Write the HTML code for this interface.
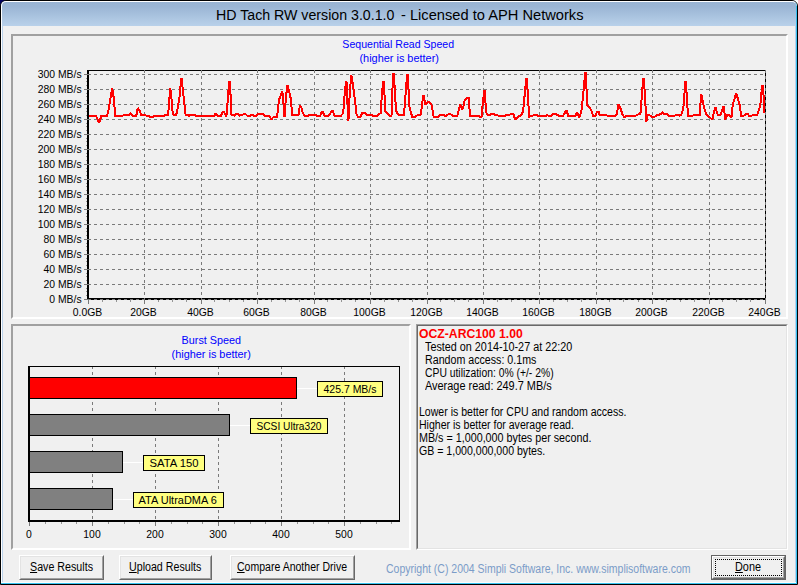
<!DOCTYPE html>
<html><head><meta charset="utf-8"><title>HD Tach RW version 3.0.1.0 - Licensed to APH Networks</title>
<style>
html,body{margin:0;padding:0;background:#f0f0f0;overflow:hidden}
#win{position:relative;width:798px;height:585px;background:#f0f0f0;overflow:hidden;font-family:"Liberation Sans", Arial, sans-serif}
#frame{left:0;top:0;width:798px;height:585px;border:1px solid #000;border-radius:6px 6px 0 0;overflow:hidden;background:#f0f0f0}
#org{left:-1px;top:-1px;width:798px;height:585px}
#win *{box-sizing:border-box}
.abs,.chart,.t,.btn,.panel{position:absolute}
.t{white-space:pre;line-height:1;transform-origin:0 0;margin:0;padding:0}
.t u{text-decoration:underline;text-underline-offset:1px;text-decoration-thickness:1px}
.titlebar{left:0;top:0;width:798px;height:26px;background:linear-gradient(#98b3d2 0,#9ab5d4 25%,#b9d1ea 100%)}
.panel{border-style:solid;border-width:2px;border-color:#a0a0a0 #fff #fff #a0a0a0}
.info{border-style:solid;border-width:1px;border-color:#a0a0a0 #fff #fff #a0a0a0}
.info:after{content:"";position:absolute;left:0;top:0;right:0;bottom:0;border-style:solid;border-width:1px;border-color:#696969 #e3e3e3 #e3e3e3 #696969}
.btn{background:#f0f0f0;border-style:solid;border-width:1px;border-color:#fff #696969 #696969 #fff}
.btn:after{content:"";position:absolute;left:0;top:0;right:0;bottom:0;border-style:solid;border-width:1px;border-color:#e3e3e3 #a0a0a0 #a0a0a0 #e3e3e3}
.btn.def{border:1px solid #646464;background:#f0f0f0}
.btn.def:after{display:none}
.btn.in{left:0;top:0;right:0;bottom:0}
.focus{position:absolute;left:2px;top:2px;right:2px;bottom:2px;border:1px dotted #000}
</style></head>
<body>
<div id="win">
<div class="abs" style="left:0;top:0;width:6px;height:6px;background:#00005c"></div>
<div class="abs" style="left:792px;top:0;width:6px;height:6px;background:#fff"></div>
<div class="abs" id="frame"><div class="abs" id="org">
<div class="abs titlebar"><span class="t" style="left:215.8px;top:7.96px;font-size:14.7px;color:#000;transform:scaleX(0.9655)">HD Tach RW version 3.0.1.0</span>
<span class="t" style="left:400.5px;top:7.96px;font-size:14.7px;color:#000;transform:scaleX(0.9980)">- Licensed to APH Networks</span></div>
<!-- window frame inner lines -->
<div class="abs" style="left:1px;top:1px;width:796px;height:30px;border:1px solid #fff;border-bottom:0;border-right-color:#7fd4f5;border-radius:5px 5px 0 0"></div>
<div class="abs" style="left:1px;top:6px;width:1px;height:578px;background:#fff"></div>
<div class="abs" style="left:2px;top:26px;width:1px;height:557px;background:#b9d1ea"></div>
<div class="abs" style="left:796px;top:6px;width:1px;height:578px;background:#38bff0"></div>
<div class="abs" style="left:795px;top:26px;width:1px;height:557px;background:#b9d1ea"></div>
<div class="abs" style="left:1px;top:583px;width:796px;height:1px;background:#38c4f0"></div>
<div class="abs" style="left:2px;top:582px;width:794px;height:1px;background:#f8fbfd"></div>

<div class="panel" style="left:11px;top:34px;width:777px;height:285px"></div>
<div class="panel" style="left:11px;top:324px;width:400px;height:226px"></div>
<div class="abs info" style="left:416px;top:324px;width:372px;height:226px">
<span class="t" style="left:2.4px;top:3.32px;font-size:12.5px;color:#ff0000;transform:scaleX(0.9765);font-weight:bold">OCZ-ARC100 1.00</span>
<span class="t" style="left:7.9px;top:16.32px;font-size:12.5px;color:#000;transform:scaleX(0.8645)">Tested on 2014-10-27 at 22:20</span>
<span class="t" style="left:7.7px;top:29.32px;font-size:12.5px;color:#000;transform:scaleX(0.8529)">Random access: 0.1ms</span>
<span class="t" style="left:7.9px;top:42.32px;font-size:12.5px;color:#000;transform:scaleX(0.8283)">CPU utilization: 0% (+/- 2%)</span>
<span class="t" style="left:7.8px;top:55.32px;font-size:12.5px;color:#000;transform:scaleX(0.8738)">Average read: 249.7 MB/s</span>
<span class="t" style="left:1.6px;top:81.32px;font-size:12.5px;color:#000;transform:scaleX(0.8433)">Lower is better for CPU and random access.</span>
<span class="t" style="left:1.6px;top:94.32px;font-size:12.5px;color:#000;transform:scaleX(0.8444)">Higher is better for average read.</span>
<span class="t" style="left:1.6px;top:107.32px;font-size:12.5px;color:#000;transform:scaleX(0.8599)">MB/s = 1,000,000 bytes per second.</span>
<span class="t" style="left:1.8px;top:120.32px;font-size:12.5px;color:#000;transform:scaleX(0.8465)">GB = 1,000,000,000 bytes.</span>
</div>
<svg class="chart" style="left:13px;top:36px" width="773" height="281" viewBox="13 36 773 281" font-family='"Liberation Sans", Arial, sans-serif'>
<text x="398.2" y="47.8" text-anchor="middle" textLength="111.7" lengthAdjust="spacingAndGlyphs" fill="#0000ff" font-size="10.67">Sequential Read Speed</text>
<text x="399.2" y="61.8" text-anchor="middle" textLength="79.5" lengthAdjust="spacingAndGlyphs" fill="#0000ff" font-size="10.67">(higher is better)</text>
<g shape-rendering="crispEdges" fill="#000">
<rect x="87" y="70" width="679" height="1"/>
<rect x="87" y="70" width="2" height="230"/>
<rect x="87" y="298" width="679" height="2"/>
<rect x="765" y="70" width="1" height="230"/>
<rect x="84" y="74" width="4" height="1" fill="#7a7a7a"/>
<rect x="84" y="89" width="4" height="1" fill="#7a7a7a"/>
<rect x="84" y="104" width="4" height="1" fill="#7a7a7a"/>
<rect x="84" y="119" width="4" height="1" fill="#7a7a7a"/>
<rect x="84" y="134" width="4" height="1" fill="#7a7a7a"/>
<rect x="84" y="149" width="4" height="1" fill="#7a7a7a"/>
<rect x="84" y="164" width="4" height="1" fill="#7a7a7a"/>
<rect x="84" y="179" width="4" height="1" fill="#7a7a7a"/>
<rect x="84" y="194" width="4" height="1" fill="#7a7a7a"/>
<rect x="84" y="209" width="4" height="1" fill="#7a7a7a"/>
<rect x="84" y="224" width="4" height="1" fill="#7a7a7a"/>
<rect x="84" y="239" width="4" height="1" fill="#7a7a7a"/>
<rect x="84" y="254" width="4" height="1" fill="#7a7a7a"/>
<rect x="84" y="269" width="4" height="1" fill="#7a7a7a"/>
<rect x="84" y="284" width="4" height="1" fill="#7a7a7a"/>
<rect x="84" y="299" width="4" height="1" fill="#7a7a7a"/>
<rect x="88" y="300" width="1" height="4" fill="#7a7a7a"/>
<rect x="144" y="300" width="1" height="4" fill="#7a7a7a"/>
<rect x="201" y="300" width="1" height="4" fill="#7a7a7a"/>
<rect x="257" y="300" width="1" height="4" fill="#7a7a7a"/>
<rect x="314" y="300" width="1" height="4" fill="#7a7a7a"/>
<rect x="370" y="300" width="1" height="4" fill="#7a7a7a"/>
<rect x="427" y="300" width="1" height="4" fill="#7a7a7a"/>
<rect x="483" y="300" width="1" height="4" fill="#7a7a7a"/>
<rect x="539" y="300" width="1" height="4" fill="#7a7a7a"/>
<rect x="596" y="300" width="1" height="4" fill="#7a7a7a"/>
<rect x="652" y="300" width="1" height="4" fill="#7a7a7a"/>
<rect x="709" y="300" width="1" height="4" fill="#7a7a7a"/>
<rect x="765" y="300" width="1" height="4" fill="#7a7a7a"/>
</g>
<path d="M88 74.5H765M88 89.5H765M88 104.5H765M88 119.5H765M88 134.5H765M88 149.5H765M88 164.5H765M88 179.5H765M88 194.5H765M88 209.5H765M88 224.5H765M88 239.5H765M88 254.5H765M88 269.5H765M88 284.5H765M88 299.5H765" stroke="#7a7a7a" stroke-width="1" stroke-dasharray="3 3" fill="none" shape-rendering="crispEdges"/>
<path d="M144.5 70V301M201.5 70V301M257.5 70V301M314.5 70V301M370.5 70V301M427.5 70V301M483.5 70V301M539.5 70V301M596.5 70V301M652.5 70V301M709.5 70V301M765.5 70V301" stroke="#7a7a7a" stroke-width="1" stroke-dasharray="3 3" fill="none" shape-rendering="crispEdges"/>
<g shape-rendering="crispEdges" fill="#959595"><rect x="102" y="300" width="1" height="2"/><rect x="116" y="300" width="1" height="2"/><rect x="130" y="300" width="1" height="2"/><rect x="158" y="300" width="1" height="2"/><rect x="172" y="300" width="1" height="2"/><rect x="186" y="300" width="1" height="2"/><rect x="214" y="300" width="1" height="2"/><rect x="229" y="300" width="1" height="2"/><rect x="243" y="300" width="1" height="2"/><rect x="271" y="300" width="1" height="2"/><rect x="285" y="300" width="1" height="2"/><rect x="299" y="300" width="1" height="2"/><rect x="327" y="300" width="1" height="2"/><rect x="341" y="300" width="1" height="2"/><rect x="355" y="300" width="1" height="2"/><rect x="384" y="300" width="1" height="2"/><rect x="398" y="300" width="1" height="2"/><rect x="412" y="300" width="1" height="2"/><rect x="440" y="300" width="1" height="2"/><rect x="454" y="300" width="1" height="2"/><rect x="468" y="300" width="1" height="2"/><rect x="497" y="300" width="1" height="2"/><rect x="511" y="300" width="1" height="2"/><rect x="525" y="300" width="1" height="2"/><rect x="553" y="300" width="1" height="2"/><rect x="567" y="300" width="1" height="2"/><rect x="581" y="300" width="1" height="2"/><rect x="609" y="300" width="1" height="2"/><rect x="623" y="300" width="1" height="2"/><rect x="638" y="300" width="1" height="2"/><rect x="666" y="300" width="1" height="2"/><rect x="680" y="300" width="1" height="2"/><rect x="694" y="300" width="1" height="2"/><rect x="722" y="300" width="1" height="2"/><rect x="736" y="300" width="1" height="2"/><rect x="750" y="300" width="1" height="2"/><rect x="86" y="78" width="1" height="1"/><rect x="86" y="81" width="1" height="1"/><rect x="86" y="85" width="1" height="1"/><rect x="86" y="93" width="1" height="1"/><rect x="86" y="96" width="1" height="1"/><rect x="86" y="100" width="1" height="1"/><rect x="86" y="108" width="1" height="1"/><rect x="86" y="111" width="1" height="1"/><rect x="86" y="115" width="1" height="1"/><rect x="86" y="123" width="1" height="1"/><rect x="86" y="126" width="1" height="1"/><rect x="86" y="130" width="1" height="1"/><rect x="86" y="138" width="1" height="1"/><rect x="86" y="141" width="1" height="1"/><rect x="86" y="145" width="1" height="1"/><rect x="86" y="153" width="1" height="1"/><rect x="86" y="156" width="1" height="1"/><rect x="86" y="160" width="1" height="1"/><rect x="86" y="168" width="1" height="1"/><rect x="86" y="171" width="1" height="1"/><rect x="86" y="175" width="1" height="1"/><rect x="86" y="183" width="1" height="1"/><rect x="86" y="186" width="1" height="1"/><rect x="86" y="190" width="1" height="1"/><rect x="86" y="198" width="1" height="1"/><rect x="86" y="201" width="1" height="1"/><rect x="86" y="205" width="1" height="1"/><rect x="86" y="213" width="1" height="1"/><rect x="86" y="216" width="1" height="1"/><rect x="86" y="220" width="1" height="1"/><rect x="86" y="228" width="1" height="1"/><rect x="86" y="231" width="1" height="1"/><rect x="86" y="235" width="1" height="1"/><rect x="86" y="243" width="1" height="1"/><rect x="86" y="246" width="1" height="1"/><rect x="86" y="250" width="1" height="1"/><rect x="86" y="258" width="1" height="1"/><rect x="86" y="261" width="1" height="1"/><rect x="86" y="265" width="1" height="1"/><rect x="86" y="273" width="1" height="1"/><rect x="86" y="276" width="1" height="1"/><rect x="86" y="280" width="1" height="1"/><rect x="86" y="288" width="1" height="1"/><rect x="86" y="291" width="1" height="1"/><rect x="86" y="295" width="1" height="1"/></g>
<text x="81.6" y="77.9" text-anchor="end" fill="#000" font-size="10.4">300 MB/s</text>
<text x="81.6" y="92.9" text-anchor="end" fill="#000" font-size="10.4">280 MB/s</text>
<text x="81.6" y="107.9" text-anchor="end" fill="#000" font-size="10.4">260 MB/s</text>
<text x="81.6" y="122.9" text-anchor="end" fill="#000" font-size="10.4">240 MB/s</text>
<text x="81.6" y="137.9" text-anchor="end" fill="#000" font-size="10.4">220 MB/s</text>
<text x="81.6" y="152.9" text-anchor="end" fill="#000" font-size="10.4">200 MB/s</text>
<text x="81.6" y="167.9" text-anchor="end" fill="#000" font-size="10.4">180 MB/s</text>
<text x="81.6" y="182.9" text-anchor="end" fill="#000" font-size="10.4">160 MB/s</text>
<text x="81.6" y="197.9" text-anchor="end" fill="#000" font-size="10.4">140 MB/s</text>
<text x="81.6" y="212.9" text-anchor="end" fill="#000" font-size="10.4">120 MB/s</text>
<text x="81.6" y="227.9" text-anchor="end" fill="#000" font-size="10.4">100 MB/s</text>
<text x="81.6" y="242.9" text-anchor="end" fill="#000" font-size="10.4">80 MB/s</text>
<text x="81.6" y="257.9" text-anchor="end" fill="#000" font-size="10.4">60 MB/s</text>
<text x="81.6" y="272.9" text-anchor="end" fill="#000" font-size="10.4">40 MB/s</text>
<text x="81.6" y="287.9" text-anchor="end" fill="#000" font-size="10.4">20 MB/s</text>
<text x="81.6" y="302.9" text-anchor="end" fill="#000" font-size="10.4">0 MB/s</text>
<text x="87.5" y="315.6" text-anchor="middle" fill="#000" font-size="10.4">0.0GB</text>
<text x="143.5" y="315.6" text-anchor="middle" fill="#000" font-size="10.4">20GB</text>
<text x="200.5" y="315.6" text-anchor="middle" fill="#000" font-size="10.4">40GB</text>
<text x="256.5" y="315.6" text-anchor="middle" fill="#000" font-size="10.4">60GB</text>
<text x="313.5" y="315.6" text-anchor="middle" fill="#000" font-size="10.4">80GB</text>
<text x="369.5" y="315.6" text-anchor="middle" fill="#000" font-size="10.4">100GB</text>
<text x="426.5" y="315.6" text-anchor="middle" fill="#000" font-size="10.4">120GB</text>
<text x="482.5" y="315.6" text-anchor="middle" fill="#000" font-size="10.4">140GB</text>
<text x="538.5" y="315.6" text-anchor="middle" fill="#000" font-size="10.4">160GB</text>
<text x="595.5" y="315.6" text-anchor="middle" fill="#000" font-size="10.4">180GB</text>
<text x="651.5" y="315.6" text-anchor="middle" fill="#000" font-size="10.4">200GB</text>
<text x="708.5" y="315.6" text-anchor="middle" fill="#000" font-size="10.4">220GB</text>
<text x="764.5" y="315.6" text-anchor="middle" fill="#000" font-size="10.4">240GB</text>
<path d="M89.1,115.6 95.8,115.6 99.2,122.8 101.4,115.6 107.0,115.6 108.6,110.0 112.2,88.0 113.7,97.7 115.3,115.6 123.0,115.6 124.5,114.8 129.1,114.6 130.6,113.6 132.7,115.6 136.3,115.6 137.8,108.0 139.9,111.0 141.2,114.8 145.5,115.1 146.5,115.8 149.1,116.2 150.6,117.0 153.2,117.0 154.2,115.8 164.6,115.8 165.6,114.8 168.2,114.6 169.2,100.8 170.3,88.5 171.3,96.7 172.8,114.1 173.8,114.9 176.2,114.9 177.9,106.9 179.5,96.7 181.2,79.4 181.8,79.4 182.8,90.5 184.1,100.8 185.6,115.1 189.2,115.6 190.8,114.8 194.9,114.8 195.9,115.8 214.4,115.8 215.4,113.9 216.4,113.9 217.9,115.6 221.0,115.6 222.6,111.8 224.1,111.8 225.9,116.1 226.4,116.1 227.7,100.8 229.1,81.5 229.6,81.5 230.8,98.7 231.5,115.1 234.4,115.6 236.4,113.9 238.1,113.9 239.3,115.8 241.2,114.8 242.7,114.8 244.2,113.9 245.3,113.9 247.3,115.8 250.4,115.8 251.4,114.8 252.9,114.8 254.0,115.8 256.0,115.8 258.1,113.9 262.7,113.9 264.7,115.8 269.4,115.8 270.9,118.7 271.9,118.7 273.5,116.9 277.1,116.9 277.9,109.5 278.9,100.3 281.9,92.3 282.4,92.3 283.7,105.9 284.3,116.1 284.8,116.1 285.8,97.7 287.4,86.1 287.9,86.1 289.9,94.6 291.2,100.8 291.9,114.8 298.6,114.8 299.8,105.4 301.2,106.9 302.9,113.1 304.7,115.6 308.3,115.6 309.4,114.8 315.6,114.8 316.7,115.8 320.3,115.8 321.8,111.8 322.8,111.8 324.4,115.8 327.9,115.8 330.5,113.1 331.7,111.0 332.8,111.0 334.6,115.8 340.8,115.8 343.3,113.1 343.8,103.8 344.9,92.6 346.0,81.5 346.5,81.5 347.4,100.8 348.0,119.5 348.5,119.5 349.3,100.8 350.0,90.5 351.1,76.4 351.6,76.4 353.6,89.5 354.6,97.7 355.6,105.9 356.7,115.1 358.2,116.9 360.3,116.9 362.3,113.1 365.4,112.9 366.9,114.8 371.5,114.8 373.1,115.8 377.2,115.8 378.7,114.1 380.8,113.1 381.3,102.8 382.1,92.6 383.2,81.5 383.7,81.5 384.7,97.7 385.3,111.0 389.6,115.8 391.2,115.8 392.0,114.1 392.2,95.6 393.1,74.3 393.6,74.3 394.7,87.4 395.3,98.7 396.1,111.0 398.3,114.8 404.0,114.8 405.0,101.8 406.0,88.5 407.1,74.8 407.6,74.8 408.6,90.5 409.1,105.9 410.6,111.0 412.2,116.9 414.7,116.9 416.3,115.6 420.9,114.6 421.9,105.9 423.2,96.4 423.7,96.4 425.5,104.9 427.6,101.8 429.1,101.8 431.7,105.4 432.7,111.0 433.7,116.9 438.3,116.9 439.9,114.8 444.0,114.8 445.0,115.8 446.5,115.8 448.8,113.9 450.1,113.9 452.7,115.8 457.3,115.8 458.3,112.1 460.1,105.1 460.6,105.1 462.1,109.5 463.6,105.9 464.6,100.3 467.2,97.7 468.7,97.9 469.4,107.9 470.1,116.7 471.3,115.8 478.5,115.8 479.5,116.9 481.5,116.9 482.1,110.0 483.1,100.8 484.2,91.2 484.7,91.2 485.6,103.8 486.4,112.6 487.7,114.8 490.3,114.8 491.3,113.9 493.3,113.9 494.9,114.8 496.9,114.8 498.5,115.8 505.1,115.8 506.7,114.8 509.7,114.8 510.8,113.9 512.8,113.9 513.8,115.1 514.9,118.7 516.2,118.7 518.5,116.7 521.5,114.8 523.1,111.0 524.1,100.8 525.1,90.5 526.2,79.4 526.8,79.4 527.7,91.5 528.5,105.9 529.2,116.9 530.8,116.2 535.4,114.8 536.5,114.8 537.6,115.8 545.8,115.8 547.1,114.8 548.3,115.8 550.9,115.8 553.5,113.9 556.0,113.9 558.6,115.8 563.2,115.8 566.0,110.5 566.5,110.5 568.3,115.8 575.5,115.8 576.5,112.9 577.6,113.1 579.1,117.9 580.1,116.2 581.7,109.0 582.7,98.7 584.0,86.4 585.1,73.3 585.6,73.3 586.6,90.5 587.1,104.9 590.4,108.5 591.9,112.1 593.3,115.8 595.5,115.8 597.1,111.8 598.6,111.8 599.6,114.8 605.8,114.8 607.3,115.8 615.1,115.8 616.7,114.1 618.5,104.6 619.0,104.6 620.8,109.0 622.3,114.1 624.4,117.2 625.9,115.8 635.6,115.8 637.2,114.8 639.7,114.1 640.8,112.1 641.3,102.8 642.1,91.5 643.2,79.4 643.7,79.4 644.9,93.6 645.6,107.9 646.0,120.6 646.5,120.6 647.4,114.8 649.5,115.1 652.1,117.2 654.1,117.2 657.2,115.1 660.3,114.3 662.3,112.6 663.8,113.9 666.9,113.9 669.0,115.8 674.6,115.8 676.2,114.8 678.2,114.8 679.7,115.8 681.3,114.8 682.8,110.0 683.8,104.9 684.4,94.6 685.4,81.5 685.9,81.5 686.7,94.6 687.4,104.9 687.9,115.8 692.7,115.8 693.7,114.8 699.9,114.8 700.4,104.9 701.1,95.3 701.6,95.3 703.5,104.9 705.0,111.0 707.1,115.6 709.1,116.7 711.2,118.7 712.5,118.7 713.7,113.1 715.0,107.6 715.5,107.6 717.8,114.8 720.4,114.8 721.9,111.0 723.2,106.6 723.7,106.6 725.2,118.5 725.8,118.5 727.1,114.8 729.1,114.8 730.6,117.2 731.7,116.7 732.7,104.9 734.2,99.7 736.0,93.8 736.5,93.8 737.8,98.7 739.9,105.9 741.2,115.8 743.5,115.8 746.0,113.9 747.6,113.9 749.1,115.8 751.7,115.8 753.2,114.8 757.3,114.8 758.8,110.0 760.4,104.9 761.1,95.6 762.3,86.1 762.8,86.1 764.0,100.8 764.5,113.1" stroke="#ff0000" stroke-width="2" fill="none" stroke-linejoin="miter" stroke-miterlimit="2" shape-rendering="crispEdges"/>
</svg>
<svg class="chart" style="left:13px;top:326px" width="396" height="222" viewBox="13 326 396 222" font-family='"Liberation Sans", Arial, sans-serif'>
<text x="211.3" y="343.8" text-anchor="middle" textLength="59.4" lengthAdjust="spacingAndGlyphs" fill="#0000ff" font-size="10.67">Burst Speed</text>
<text x="211.2" y="357.8" text-anchor="middle" textLength="79.3" lengthAdjust="spacingAndGlyphs" fill="#0000ff" font-size="10.67">(higher is better)</text>
<path d="M92.5 366V520M155.5 366V520M218.5 366V520M281.5 366V520M344.5 366V520" stroke="#7a7a7a" stroke-width="1" stroke-dasharray="3 3" fill="none" shape-rendering="crispEdges"/>
<g shape-rendering="crispEdges">
<rect x="29.5" y="377.5" width="267" height="21" fill="#ff0000" stroke="#000" stroke-width="1"/>
<rect x="29.5" y="414.5" width="200" height="21" fill="#808080" stroke="#000" stroke-width="1"/>
<rect x="29.5" y="451.5" width="93" height="21" fill="#808080" stroke="#000" stroke-width="1"/>
<rect x="29.5" y="488.5" width="83" height="21" fill="#808080" stroke="#000" stroke-width="1"/>
<rect x="28" y="366" width="372" height="1" fill="#000"/>
<rect x="28" y="366" width="2" height="156" fill="#000"/>
<rect x="28" y="520" width="372" height="2" fill="#000"/>
<rect x="399" y="366" width="1" height="156" fill="#000"/>
<rect x="29" y="522" width="1" height="4" fill="#7a7a7a"/>
<rect x="92" y="522" width="1" height="4" fill="#7a7a7a"/>
<rect x="155" y="522" width="1" height="4" fill="#7a7a7a"/>
<rect x="218" y="522" width="1" height="4" fill="#7a7a7a"/>
<rect x="281" y="522" width="1" height="4" fill="#7a7a7a"/>
<rect x="344" y="522" width="1" height="4" fill="#7a7a7a"/>
<rect x="45" y="522" width="1" height="2" fill="#959595"/>
<rect x="61" y="522" width="1" height="2" fill="#959595"/>
<rect x="76" y="522" width="1" height="2" fill="#959595"/>
<rect x="108" y="522" width="1" height="2" fill="#959595"/>
<rect x="124" y="522" width="1" height="2" fill="#959595"/>
<rect x="139" y="522" width="1" height="2" fill="#959595"/>
<rect x="171" y="522" width="1" height="2" fill="#959595"/>
<rect x="187" y="522" width="1" height="2" fill="#959595"/>
<rect x="202" y="522" width="1" height="2" fill="#959595"/>
<rect x="234" y="522" width="1" height="2" fill="#959595"/>
<rect x="250" y="522" width="1" height="2" fill="#959595"/>
<rect x="265" y="522" width="1" height="2" fill="#959595"/>
<rect x="297" y="522" width="1" height="2" fill="#959595"/>
<rect x="313" y="522" width="1" height="2" fill="#959595"/>
<rect x="328" y="522" width="1" height="2" fill="#959595"/>
<rect x="360" y="522" width="1" height="2" fill="#959595"/>
<rect x="376" y="522" width="1" height="2" fill="#959595"/>
<rect x="391" y="522" width="1" height="2" fill="#959595"/>
<rect x="297" y="388" width="20" height="1" fill="#fff"/>
<rect x="317.5" y="381.5" width="65" height="15" fill="#ffff80" stroke="#000" stroke-width="1"/>
<rect x="230" y="425" width="20" height="1" fill="#fff"/>
<rect x="250.5" y="418.5" width="77" height="15" fill="#ffff80" stroke="#000" stroke-width="1"/>
<rect x="123" y="462" width="20" height="1" fill="#fff"/>
<rect x="143.5" y="455.5" width="61" height="15" fill="#ffff80" stroke="#000" stroke-width="1"/>
<rect x="113" y="499" width="20" height="1" fill="#fff"/>
<rect x="133.5" y="492.5" width="90" height="15" fill="#ffff80" stroke="#000" stroke-width="1"/>
</g>
<text x="350.0" y="392.8" text-anchor="middle" textLength="53" lengthAdjust="spacingAndGlyphs" fill="#000" font-size="10.67">425.7 MB/s</text>
<text x="289.0" y="429.8" text-anchor="middle" textLength="65" lengthAdjust="spacingAndGlyphs" fill="#000" font-size="10.67">SCSI Ultra320</text>
<text x="174.0" y="466.8" text-anchor="middle" textLength="49" lengthAdjust="spacingAndGlyphs" fill="#000" font-size="10.67">SATA 150</text>
<text x="177.7" y="503.8" text-anchor="middle" textLength="78.4" lengthAdjust="spacingAndGlyphs" fill="#000" font-size="10.67">ATA UltraDMA 6</text>
<text x="29" y="538.0" text-anchor="middle" fill="#000" font-size="10.4">0</text>
<text x="92" y="538.0" text-anchor="middle" fill="#000" font-size="10.4">100</text>
<text x="155" y="538.0" text-anchor="middle" fill="#000" font-size="10.4">200</text>
<text x="218" y="538.0" text-anchor="middle" fill="#000" font-size="10.4">300</text>
<text x="281" y="538.0" text-anchor="middle" fill="#000" font-size="10.4">400</text>
<text x="344" y="538.0" text-anchor="middle" fill="#000" font-size="10.4">500</text>
</svg>
<div class="btn" role="button" style="left:19px;top:555px;width:85px;height:25px"><span class="t" style="left:10.3px;top:4.92px;font-size:12.5px;color:#000;transform:scaleX(0.8553)"><u>S</u>ave Results</span></div>
<div class="btn" role="button" style="left:119px;top:555px;width:93px;height:25px"><span class="t" style="left:8.9px;top:4.92px;font-size:12.5px;color:#000;transform:scaleX(0.8529)"><u>U</u>pload Results</span></div>
<div class="btn" role="button" style="left:230px;top:555px;width:125px;height:25px"><span class="t" style="left:6.0px;top:4.92px;font-size:12.5px;color:#000;transform:scaleX(0.8421)"><u>C</u>ompare Another Drive</span></div>
<span class="t" style="left:385.9px;top:562.82px;font-size:12.5px;color:#7b9cc8;transform:scaleX(0.8397)">Copyright (C) 2004 Simpli Software, Inc. www.simplisoftware.com</span>
<div class="btn def" role="button" style="left:711px;top:555px;width:75px;height:25px"><div class="btn in"><div class="focus"></div></div><span class="t" style="left:23.2px;top:4.92px;font-size:12.5px;color:#000;transform:scaleX(0.8698)"><u>D</u>one</span></div>
</div></div>
</div>
</body></html>
